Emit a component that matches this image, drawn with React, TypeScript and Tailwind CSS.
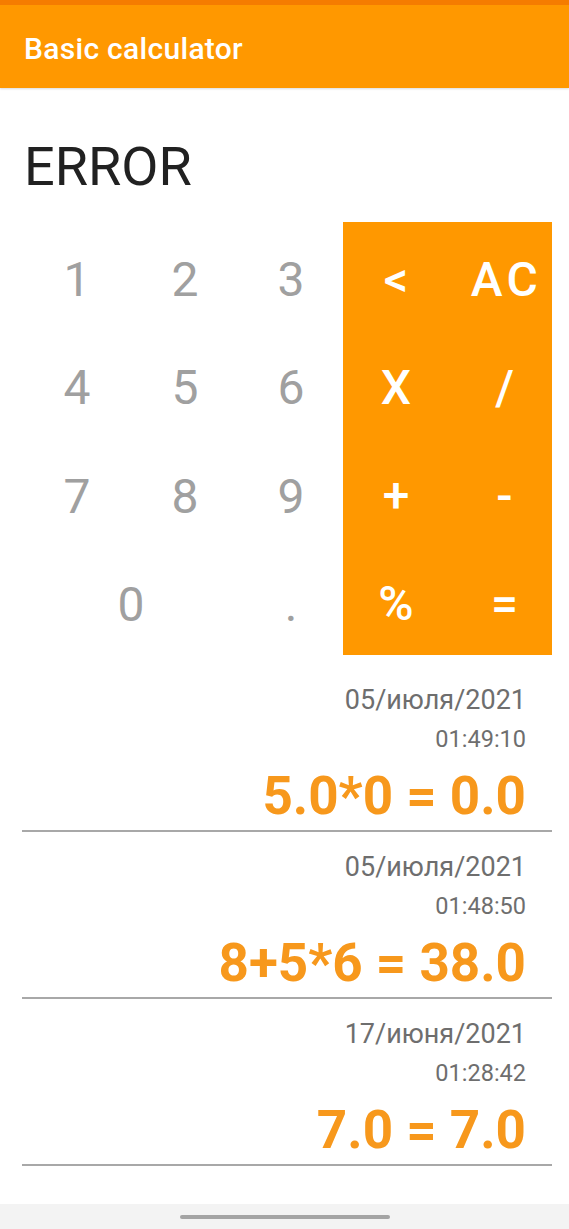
import React from "react";

const history = [
  { date: "05/июля/2021", time: "01:49:10", expr: "5.0*0 = 0.0" },
  { date: "05/июля/2021", time: "01:48:50", expr: "8+5*6 = 38.0" },
  { date: "17/июня/2021", time: "01:28:42", expr: "7.0 = 7.0" },
];

function Digit({ label, span }: { label: string; span?: boolean }) {
  return (
    <div
      className={
        "flex items-center justify-center h-[108px] pt-[8px] text-[48px] text-[#a0a0a0] leading-none " +
        (span ? "col-span-2" : "")
      }
    >
      {label}
    </div>
  );
}

function Op({ label, right }: { label: string; right?: boolean }) {
  return (
    <div
      className={
        "flex items-center justify-center h-[108px] pt-[8px] text-[48px] text-white font-medium leading-none " +
        (right ? "pl-[8px]" : "")
      }
    >
      {label}
    </div>
  );
}

export default function App() {
  return (
    <div className="w-[569px] h-[1229px] bg-white flex flex-col font-['Roboto',sans-serif] overflow-hidden">
      <header className="h-[88px] border-t-[5px] border-[#f57c00] bg-[#ff9800] flex items-center px-6 pt-[4px] shadow-[0_1px_2px_rgba(0,0,0,0.15)]">
        <h1 className="text-white text-[30px] leading-none font-medium tracking-[0.01em]">Basic calculator</h1>
      </header>

      <div className="h-[134px] pl-6 pt-[52px]">
        <div className="text-[54px] leading-none text-[#212121]">ERROR</div>
      </div>

      <div className="flex pl-[23px]">
        <div className="grid grid-cols-[108px_108px_104px] w-[320px]">
          <Digit label="1" />
          <Digit label="2" />
          <Digit label="3" />
          <Digit label="4" />
          <Digit label="5" />
          <Digit label="6" />
          <Digit label="7" />
          <Digit label="8" />
          <Digit label="9" />
          <Digit label="0" span />
          <Digit label="." />
        </div>
        <div className="grid grid-cols-[106px_103px] grid-rows-[108px_108px_108px_109px] w-[209px] bg-[#ff9800]">
          <Op label="<" />
          <div className="flex items-center justify-center h-[108px] pt-[8px] pl-[12px] text-[48px] text-white font-medium leading-none tracking-[0.09em]">
            AC
          </div>
          <Op label="X" />
          <Op label="/" right />
          <Op label="+" />
          <Op label="-" right />
          <Op label="%" />
          <Op label="=" right />
        </div>
      </div>

      <div className="flex flex-col mt-[10px] ml-[22px] w-[530px]">
        {history.map((h, i) => (
          <div key={i} className="h-[167px] border-b-2 border-[#a8a8a8] flex flex-col items-end pr-[26px]">
            <div className="mt-[19px] text-[27px] leading-[32px] text-[#6e6e6e]">{h.date}</div>
            <div className="mt-[9px] text-[23.5px] leading-[28px] text-[#6e6e6e]">{h.time}</div>
            <div className="mt-[13px] text-[53px] leading-[60px] font-bold text-[#f7981c]">{h.expr}</div>
          </div>
        ))}
      </div>

      <div className="mt-auto h-[25px] bg-[#f3f3f3] flex items-center justify-center">
        <div className="w-[210px] h-[4px] rounded-full bg-[#a4a4a4]" />
      </div>
    </div>
  );
}
